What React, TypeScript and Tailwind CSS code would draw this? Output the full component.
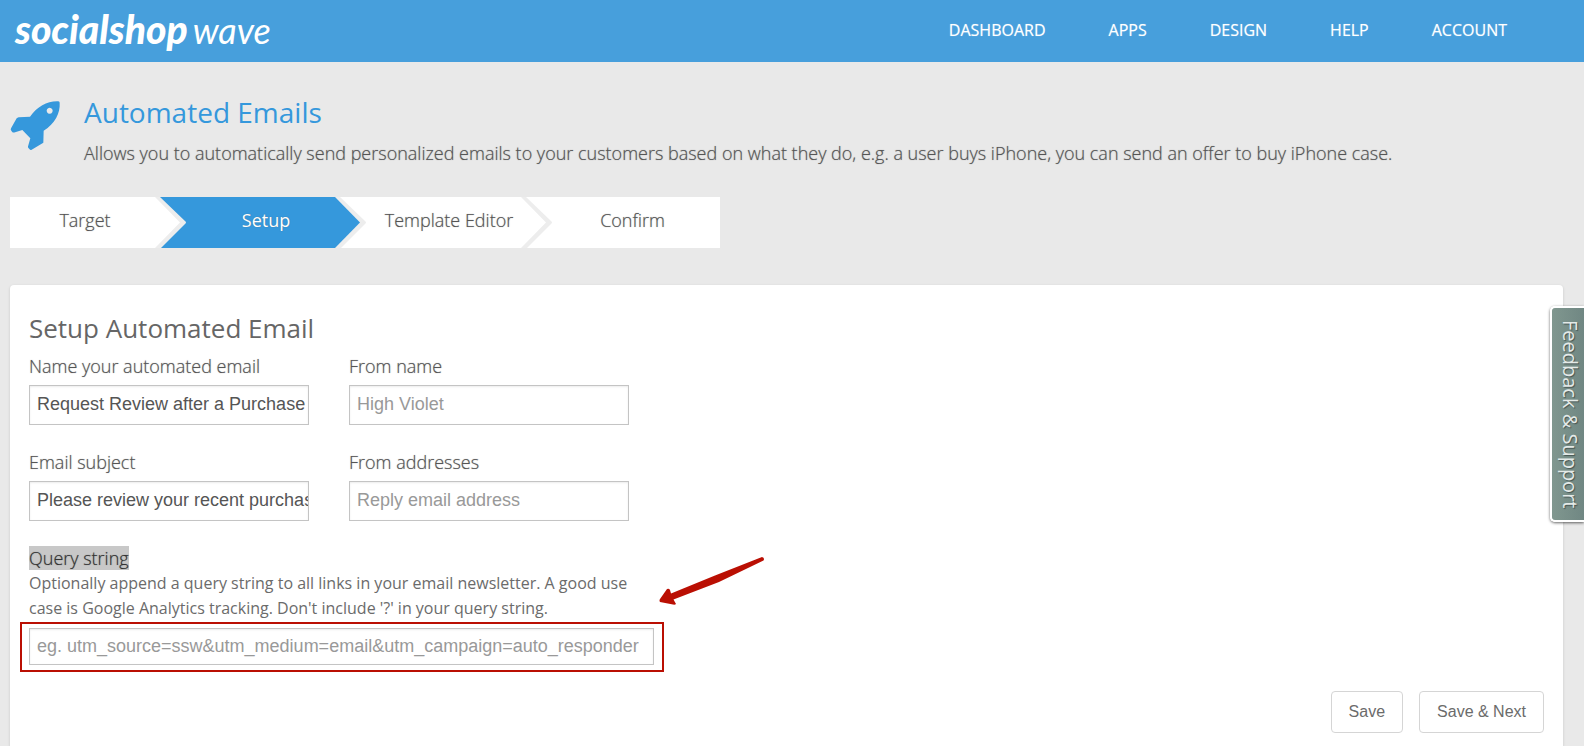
import React from "react";

const navItems = ["DASHBOARD", "APPS", "DESIGN", "HELP", "ACCOUNT"];

function Header() {
  return (
    <header className="flex h-[62px] shrink-0 items-center justify-between bg-[#479fdc] pr-[77px] pl-[15px] text-white">
      <a href="#" className="flex items-baseline gap-[5px] pb-1 font-['Lato'] leading-none italic">
        <span className="text-[39px] font-black">socialshop</span>
        <span className="text-[36px] font-normal">wave</span>
      </a>
      <nav className="flex gap-[63px] pb-[2px] text-[16px] font-normal [text-shadow:0_0_1px_rgba(255,255,255,0.5)]">
        {navItems.map((item) => (
          <a key={item} href="#">
            {item}
          </a>
        ))}
      </nav>
    </header>
  );
}

function Rocket() {
  return (
    <svg viewBox="30 60 153 153" className="mt-[38px] size-[51px] shrink-0" aria-hidden="true">
      <path
        fill="#3598dc"
        fillRule="evenodd"
        d="M175 63.5Q179 63.500 179 68C181 100 165 130 131 152L130 188L95 209Q91 211 88 207L84.500 203Q83 200 85 196L91 175L67 150L43 157.500Q39 158.500 36 155L33 151Q31 148 33.500 144L50 115Q52 112 56 111.500L90 110C112 78 143 62 175 63.500ZM149 83a9 9 0 1 0 .01 0Z"
      />
    </svg>
  );
}

function Chevron({ fill }: { fill: string }) {
  return (
    <svg viewBox="0 0 32 51" className="absolute top-0 left-full z-10 h-[51px] w-8" aria-hidden="true">
      <path d="M0 0H5L30 24Q32 25.500 30 27L6 51H0Z" fill="#ededed" />
      <path d="M-1 0H0L25 25.500L0 51H-1Z" className={fill} />
    </svg>
  );
}

const steps = [
  { label: "Target", box: "w-[145px] bg-white pl-[5px]", fill: "fill-white" },
  { label: "Setup", box: "w-[180px] bg-[#3598dc] pl-[42px] font-normal text-white", fill: "fill-[#3598dc]" },
  { label: "Template Editor", box: "w-[186px] bg-white pl-[42px]", fill: "fill-white" },
  { label: "Confirm", box: "w-[199px] bg-white pl-6", fill: "" },
];

function Field({
  id,
  label,
  value,
  placeholder,
}: {
  id: string;
  label: string;
  value?: string;
  placeholder?: string;
}) {
  return (
    <div className="flex w-[280px] flex-col gap-[7px]">
      <label htmlFor={id} className="text-[18px] leading-6 [text-shadow:0_0_1px_rgba(85,85,85,0.6)]">
        {label}
      </label>
      <input
        id={id}
        type="text"
        defaultValue={value}
        placeholder={placeholder}
        className="h-10 border border-[#c4c4c4] bg-white pr-0 pb-[2px] pl-[7px] font-['Liberation_Sans',sans-serif] text-[18px] text-[#555] shadow-[inset_0_1px_2px_rgba(0,0,0,0.08)] outline-none placeholder:text-[#999]"
      />
    </div>
  );
}

export default function App() {
  return (
    <div className="relative flex min-h-screen flex-col bg-[#e9e9e9] font-['Open_Sans',sans-serif] font-light text-[#555]">
      <Header />

      <main className="flex flex-1 flex-col pr-[21px] pl-[10px]">
        <div className="flex gap-[23px]">
          <Rocket />
          <div className="pt-[30px]">
            <h1 className="text-[28px] leading-[40px] font-normal text-[#3598dc]">Automated Emails</h1>
            <p className="mt-[9px] text-[18px] leading-6 [text-shadow:0_0_1px_rgba(85,85,85,0.6)]">
              Allows you to automatically send personalized emails to your customers based on what they do, e.g. a user buys
              iPhone, you can send an offer to buy iPhone case.
            </p>
          </div>
        </div>

        <ol className="mt-8 flex text-[18px]">
          {steps.map((step) => (
            <li key={step.label} className={"relative flex h-[51px] items-center justify-center pb-1 " + step.box}>
              <span className="relative z-20 whitespace-nowrap [text-shadow:0_0_1px_rgba(85,85,85,0.6)]">
                {step.label}
              </span>
              {step.fill && <Chevron fill={step.fill} />}
            </li>
          ))}
        </ol>

        <section className="mt-[37px] flex flex-1 flex-col rounded-t bg-white px-[19px] pt-[25px] pb-[13px] shadow-[0_1px_3px_rgba(0,0,0,0.15)]">
          <h2 className="text-[26px] leading-9 font-normal text-[#666]">Setup Automated Email</h2>
          <form className="flex flex-1 flex-col" onSubmit={(e) => e.preventDefault()}>
            <div className="mt-2 flex gap-10">
              <Field id="email-name" label="Name your automated email" value="Request Review after a Purchase" />
              <Field id="from-name" label="From name" placeholder="High Violet" />
            </div>
            <div className="mt-[25px] flex gap-10">
              <Field id="email-subject" label="Email subject" value="Please review your recent purchase" />
              <Field id="from-address" label="From addresses" placeholder="Reply email address" />
            </div>

            <div className="mt-[25px] w-[625px]">
              <label
                htmlFor="query"
                className="inline-block bg-[#c8c8c8] align-top text-[18px] leading-6 text-[#333] [text-shadow:0_0_1px_rgba(51,51,51,0.6)]"
              >
                Query string
              </label>
              <p className="w-[610px] pt-px text-[16px] leading-[25px] font-normal text-[#6b6b6b]">
                Optionally append a query string to all links in your email newsletter. A good use case is Google Analytics
                tracking. Don't include '?' in your query string.
              </p>
              <div className="relative mt-[7px]">
                <input
                  id="query"
                  type="text"
                  placeholder="eg. utm_source=ssw&utm_medium=email&utm_campaign=auto_responder"
                  className="h-[37px] w-full border border-[#c4c4c4] bg-white pr-0 pl-[7px] font-['Liberation_Sans',sans-serif] text-[18px] shadow-[inset_0_1px_2px_rgba(0,0,0,0.08)] outline-none placeholder:text-[#999]"
                />
                <div className="pointer-events-none absolute -top-[6px] -right-[10px] -bottom-[7px] -left-[9px] border-2 border-[#ba0f03]" />
                <svg
                  viewBox="0 0 106 50"
                  className="pointer-events-none absolute bottom-[59px] left-[630px] h-[50px] w-[106px]"
                  aria-hidden="true"
                >
                  <path
                    d="M103 1Q106 2 104.500 4.500L60 26L14.500 43.500L17 48Q16 49 14 48.500L1 46Q0 44.500 1 43L8 33Q10 32 11 34L12 37.500L56 19.500Z"
                    fill="#ba0f03"
                  />
                </svg>
              </div>
            </div>

            <div className="mt-auto flex justify-end gap-4 pt-[26px] font-['Liberation_Sans',sans-serif] text-[16px] text-[#6b6b6b]">
              <button type="button" className="h-[42px] rounded border border-[#d5d5d5] bg-white px-[17px]">
                Save
              </button>
              <button type="submit" className="h-[42px] rounded border border-[#d5d5d5] bg-white px-[17px]">
                Save &amp; Next
              </button>
            </div>
          </form>
        </section>
      </main>

      <button
        type="button"
        className="absolute top-[306px] right-0 z-30 flex h-[216px] w-[34px] items-center justify-center rounded-l-[5px] border-2 border-r-0 border-white bg-linear-to-r from-[#80978f] to-[#708783] pl-1 text-[20px] font-normal text-[#e4eae8] shadow-[0_1px_3px_rgba(0,0,0,0.6)] [text-shadow:1px_-1px_1px_rgba(0,0,0,0.4)] [writing-mode:vertical-rl]"
      >
        Feedback &amp; Support
      </button>
    </div>
  );
}
